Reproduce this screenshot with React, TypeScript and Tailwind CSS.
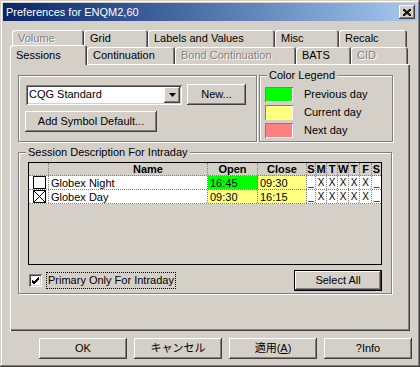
import React from "react";

// classic win2k 3d edges
const RAISED =
  "shadow-[inset_-1px_-1px_0_#404040,inset_1px_1px_0_#ffffff,inset_-2px_-2px_0_#808080]";

function Btn({ children, w, isDefault }: { children: React.ReactNode; w: string; isDefault?: boolean }) {
  if (isDefault) {
    return (
      <div className={`${w} h-[21px] border border-black bg-[#d4d0c8]`}>
        <div className="h-full w-full flex items-center justify-center shadow-[inset_-1px_-1px_0_#404040,inset_1px_1px_0_#ffffff,inset_-2px_-2px_0_#808080]">
          {children}
        </div>
      </div>
    );
  }
  return (
    <div className={`${w} h-[21px] flex items-center justify-center bg-[#d4d0c8] ${RAISED}`}>{children}</div>
  );
}

function Tab({ label, w, disabled, selected }: { label: string; w: string; disabled?: boolean; selected?: boolean }) {
  return (
    <div
      className={`${w} ${
        selected ? "h-[20px] -mt-[2px] relative z-10 pt-[1px]" : "h-[17px]"
      } shrink-0 flex items-center pl-[6px] rounded-t-[3px] bg-[#d4d0c8] shadow-[inset_1px_1px_0_#ffffff,inset_-1px_0_0_#404040,inset_-2px_0_0_#808080] ${
        disabled ? "text-[#808080] [text-shadow:1px_1px_0_#ffffff]" : "text-black"
      }`}
    >
      {label}
    </div>
  );
}

function Swatch({ color, label }: { color: string; label: string }) {
  return (
    <div className="flex items-center h-[15px]">
      <div className={`w-[28px] h-[15px] ${color} shadow-[inset_1px_1px_0_#808080,inset_-1px_-1px_0_#ffffff]`} />
      <span className="ml-[11px]">{label}</span>
    </div>
  );
}

const DAYS = ["S", "M", "T", "W", "T", "F", "S"];
const DAY_W = ["w-[9px]", "w-[11px]", "w-[11px]", "w-[11px]", "w-[11px]", "w-[12px]", "w-[9px]"];

function Row({ name, open, close, openBg, checked }: { name: string; open: string; close: string; openBg: string; checked?: boolean }) {
  return (
    <div className="flex h-[14px] bg-white border-b border-dotted border-[#808080]">
      <div className="w-[20px] border-r border-dotted border-[#808080] flex items-center pl-[4px]">
        <svg width="13" height="13" viewBox="0 0 13 13">
          <rect x="0.5" y="0.5" width="12" height="12" fill="#fff" stroke="#000" />
          {checked && <path d="M1 1 L12 12 M12 1 L1 12" stroke="#000" strokeWidth="1" />}
        </svg>
      </div>
      <div className="w-[159px] border-r border-dotted border-[#808080] pl-[2px] leading-[14px]">{name}</div>
      <div className={`w-[50px] ${openBg} border-r border-dotted border-[#808080] pl-[2px] leading-[14px]`}>{open}</div>
      <div className="w-[49px] bg-[#ffff80] border-r border-dotted border-[#808080] pl-[2px] leading-[14px]">{close}</div>
      {DAY_W.map((w, i) => (
        <div
          key={i}
          className={`${w} ${i < 6 ? "border-r border-dotted border-[#808080]" : ""} text-center leading-[14px] text-[10px]`}
        >
          {i === 0 || i === 6 ? "_" : "X"}
        </div>
      ))}
    </div>
  );
}

export default function App() {
  return (
    <div className="w-[420px] h-[367px] bg-[#d4d0c8] p-[3px] flex flex-col text-[11px] text-black font-['Liberation_Sans','Noto_Sans_CJK_JP',sans-serif] shadow-[inset_-1px_-1px_0_#404040,inset_1px_1px_0_#d4d0c8,inset_-2px_-2px_0_#808080,inset_2px_2px_0_#ffffff]">
      {/* title bar */}
      <div className="h-[18px] flex items-center pl-[3px] pr-[2px] bg-gradient-to-r from-[#0a246a] to-[#a6caf0] text-white text-[11px]">
        <span>Preferences for ENQM2,60</span>
        <div className={`ml-auto w-[16px] h-[14px] bg-[#d4d0c8] flex items-center justify-center ${RAISED}`}>
          <svg width="8" height="7" viewBox="0 0 8 7">
            <path d="M0 0 L8 7 M1 0 L8 6 M0 1 L7 7 M8 0 L0 7 M7 0 L0 6 M8 1 L1 7" stroke="#000" strokeWidth="1" />
          </svg>
        </div>
      </div>

      {/* tab control */}
      <div className="ml-[7px] mt-[9px] w-[400px] flex flex-col">
        <div className="flex pl-[2px]">
          <Tab label="Volume" w="w-[72px]" disabled />
          <Tab label="Grid" w="w-[64px]" />
          <Tab label="Labels and Values" w="w-[127px]" />
          <Tab label="Misc" w="w-[64px]" />
          <Tab label="Recalc" w="w-[68px]" />
        </div>
        <div className="flex h-[17px] items-start">
          <Tab label="Sessions" w="w-[77px]" selected />
          <Tab label="Continuation" w="w-[88px]" />
          <Tab label="Bond Continuation" w="w-[121px]" disabled />
          <Tab label="BATS" w="w-[55px]" />
          <Tab label="CID" w="w-[57px]" disabled />
        </div>

        {/* panel */}
        <div className="h-[267px] pl-[8px] pt-[11px] flex flex-col shadow-[inset_1px_1px_0_#ffffff,inset_-1px_-1px_0_#404040,inset_-2px_-2px_0_#808080]">
          <div className="flex gap-[2px]">
            <div className="w-[239px] h-[67px] border border-[#808080] shadow-[inset_1px_1px_0_#ffffff,1px_1px_0_#ffffff] pl-[6px] pt-[8px] flex flex-col">
              <div className="flex items-center h-[21px]">
                <div className="ml-[1px] w-[156px] h-[20px] bg-white flex items-center shadow-[inset_1px_1px_0_#808080,inset_-1px_-1px_0_#ffffff,inset_2px_2px_0_#404040,inset_-2px_-2px_0_#d4d0c8] pl-[3px] pr-[2px]">
                  <span className="flex-1">CQG Standard</span>
                  <div className={`w-[16px] h-[16px] bg-[#d4d0c8] flex items-center justify-center ${RAISED}`}>
                    <svg width="7" height="4" viewBox="0 0 7 4">
                      <path d="M0 0 H7 L3.5 4 Z" fill="#000" />
                    </svg>
                  </div>
                </div>
                <div className="ml-[5px]">
                  <Btn w="w-[59px]">New...</Btn>
                </div>
              </div>
              <div className="mt-[6px]">
                <Btn w="w-[132px]">Add Symbol Default...</Btn>
              </div>
            </div>

            <div className="relative w-[134px] h-[67px] border border-[#808080] shadow-[inset_1px_1px_0_#ffffff,1px_1px_0_#ffffff] pl-[5px] pt-[11px] flex flex-col gap-[3px]">
              <span className="absolute -top-[8px] left-[7px] px-[2px] bg-[#d4d0c8] leading-[14px]">Color Legend</span>
              <Swatch color="bg-[#00ff00]" label="Previous day" />
              <Swatch color="bg-[#ffff80]" label="Current day" />
              <Swatch color="bg-[#ff8080]" label="Next day" />
            </div>
          </div>

          <div className="relative mt-[10px] w-[374px] h-[142px] border border-[#808080] shadow-[inset_1px_1px_0_#ffffff,1px_1px_0_#ffffff] pl-[9px] pt-[9px] flex flex-col">
            <span className="absolute -top-[8px] left-[7px] px-[2px] bg-[#d4d0c8] leading-[14px]">
              Session Description For Intraday
            </span>
            <div className="w-[354px] h-[103px] border border-black bg-[#d4d0c8] flex flex-col">
              <div className="flex h-[13px] font-bold text-[11px] leading-[13px] border-b border-dotted border-[#808080]">
                <div className="w-[20px] border-r border-dotted border-[#808080]" />
                <div className="w-[159px] border-r border-dotted border-[#808080] pl-[84px]">Name</div>
                <div className="w-[50px] border-r border-dotted border-[#808080] text-center">Open</div>
                <div className="w-[49px] border-r border-dotted border-[#808080] text-center">Close</div>
                {DAY_W.map((w, i) => (
                  <div key={i} className={`${w} ${i < 6 ? "border-r border-dotted border-[#808080]" : ""} text-center`}>
                    {DAYS[i]}
                  </div>
                ))}
              </div>
              <Row name="Globex Night" open="16:45" close="09:30" openBg="bg-[#00ff00]" />
              <Row name="Globex Day" open="09:30" close="16:15" openBg="bg-[#ffff80]" checked />
            </div>

            <div className="flex items-center mt-[5px] pr-[9px]">
              <div className="ml-[1px] w-[13px] h-[13px] bg-white shadow-[inset_1px_1px_0_#808080,inset_-1px_-1px_0_#ffffff,inset_2px_2px_0_#404040,inset_-2px_-2px_0_#d4d0c8] flex items-center justify-center">
                <svg width="9" height="9" viewBox="0 0 9 9">
                  <path d="M1 4 L3 6 L8 1 M1 5 L3 7 L8 2 M1 6 L3 8 L8 3" stroke="#000" strokeWidth="1" fill="none" />
                </svg>
              </div>
              <span className="ml-[4px] border border-dotted border-black px-[1px] leading-[15px]">Primary Only For Intraday</span>
              <div className="ml-auto">
                <Btn w="w-[88px]" isDefault>
                  Select All
                </Btn>
              </div>
            </div>
          </div>
        </div>
      </div>

      {/* bottom buttons */}
      <div className="flex gap-[7px] pl-[36px] mt-[7px]">
        <Btn w="w-[88px]">OK</Btn>
        <Btn w="w-[88px]">キャンセル</Btn>
        <Btn w="w-[88px]">
          <span>
            適用(<span className="underline">A</span>)
          </span>
        </Btn>
        <Btn w="w-[88px]">?Info</Btn>
      </div>
    </div>
  );
}
